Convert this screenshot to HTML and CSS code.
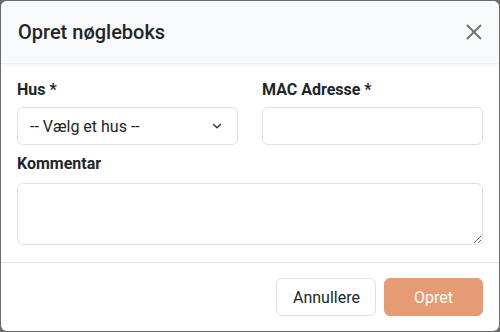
FILE: index.html
```html
<!DOCTYPE html>
<html>
<head>
    <meta charset="UTF-8">
    <meta name="viewport" content="width=device-width, initial-scale=1.0">
    <title>Opret nøgleboks</title>
    <link rel="stylesheet" href="styles.css">
</head>
<body>
    <div class="modal">
        <div class="modal-header">
            <h5 class="modal-title">Opret nøgleboks</h5>
            <button class="btn-close" aria-label="Luk">
                <svg width="16" height="16" viewBox="0 0 16 16">
                    <path d="M1 1L15 15M15 1L1 15" stroke="#6f6f6f" stroke-width="1.8" fill="none"/>
                </svg>
            </button>
        </div>
        <div class="modal-body">
            <div class="row">
                <div class="field">
                    <label class="form-label">Hus *</label>
                    <div class="select-wrap">
                        <select class="form-control form-select">
                            <option>-- Vælg et hus --</option>
                        </select>
                        <svg class="chevron" width="16" height="16" viewBox="0 0 16 16">
                            <path d="M4.5 6.5L8 9.8L11.5 6.5" stroke="#343a40" stroke-width="1.5" fill="none" stroke-linecap="round" stroke-linejoin="round"/>
                        </svg>
                    </div>
                </div>
                <div class="field">
                    <label class="form-label">MAC Adresse *</label>
                    <input class="form-control" type="text">
                </div>
            </div>
            <div class="field">
                <label class="form-label comment-label">Kommentar</label>
                <textarea class="form-control comment"></textarea>
            </div>
        </div>
        <div class="modal-footer">
            <button class="btn btn-outline">Annullere</button>
            <button class="btn btn-primary">Opret</button>
        </div>
    </div>
</body>
</html>
```

FILE: styles.css
```css
html, body {
    height: 100%;
}
body {
    margin: 0;
    background: #6b6b6b;
    font-family: Roboto, "Liberation Sans", sans-serif;
    color: #212529;
    padding: 1px;
    box-sizing: border-box;
}
.modal {
    height: 100%;
    background: #fff;
    border-radius: 6px;
    display: flex;
    flex-direction: column;
    overflow: hidden;
}
.modal-header {
    display: flex;
    justify-content: space-between;
    align-items: center;
    padding: 16px 16px 16px 17px;
    background: #f8f9fa;
    border-bottom: 1px solid #eceef0;
    box-shadow: 0 2px 4px rgba(0, 0, 0, 0.04);
}
.modal-title {
    margin: 0;
    font-size: 20px;
    font-weight: 500;
    line-height: 30px;
}
.btn-close {
    border: 0;
    background: none;
    padding: 0;
    width: 16px;
    height: 16px;
    margin-right: 1px;
    display: flex;
}
.modal-body {
    padding: 14px 16px 16px 16px;
    display: flex;
    flex-direction: column;
    gap: 7px;
}
.row {
    display: grid;
    grid-template-columns: 1fr 1fr;
    gap: 24px;
}
.field {
    display: flex;
    flex-direction: column;
}
.form-label {
    font-size: 16px;
    font-weight: 700;
    line-height: 24px;
    margin-bottom: 5px;
}
.comment-label {
    margin-bottom: 7px;
}
.form-control {
    box-sizing: border-box;
    width: 100%;
    height: 38px;
    border: 1px solid #dee2e6;
    border-radius: 6px;
    background: #fff;
    font-family: inherit;
    font-size: 16px;
    color: #212529;
    padding: 6px 12px;
    margin: 0;
}
.select-wrap {
    position: relative;
}
.form-select {
    appearance: none;
    -webkit-appearance: none;
    padding-right: 36px;
}
.chevron {
    position: absolute;
    right: 13px;
    top: 11px;
    pointer-events: none;
}
.comment {
    height: 62px;
    resize: vertical;
}
.modal-footer {
    margin-top: auto;
    border-top: 1px solid #dee2e6;
    display: flex;
    justify-content: flex-end;
    gap: 8px;
    padding: 15px 16px 15px;
}
.btn {
    font-family: inherit;
    font-size: 16px;
    height: 38px;
    border-radius: 6px;
    padding: 0 16px;
}
.btn-outline {
    width: 100px;
    background: #fff;
    border: 1px solid #dee2e6;
    color: #212529;
}
.btn-primary {
    width: 99px;
    background: #e69b75;
    border: 1px solid #e69b75;
    color: #fff;
}
```
